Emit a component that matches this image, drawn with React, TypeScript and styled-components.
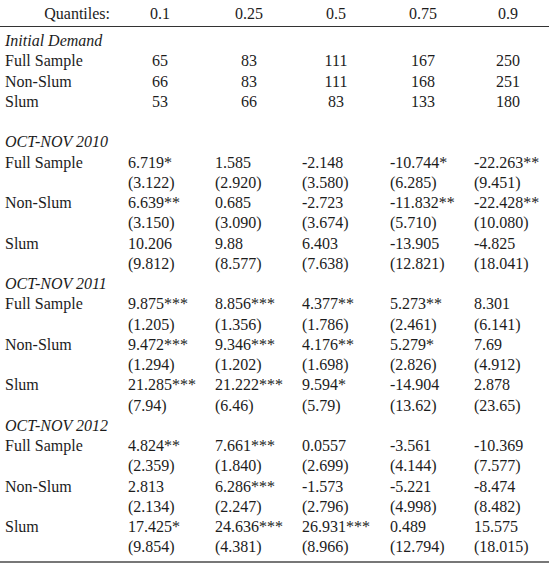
import styled, { createGlobalStyle } from "styled-components";

const GlobalStyle = createGlobalStyle`
    html, body {
        margin: 0;
        padding: 0;
        background: #ffffff;
    }
    body {
        font-family: "Liberation Serif", "Times New Roman", serif;
        color: #1c1c1c;
    }
`;

// columns: left edge of the figures and the width the centred numbers sit in
const COLS = [
    { track: 87, span: 64 },
    { track: 87, span: 68 },
    { track: 88, span: 68 },
    { track: 84, span: 66 },
    { track: 75, span: 68 },
];

const StyledWrapper = styled.div`
    width: 549px;
    height: 564px;
    overflow: hidden;
`;

const StyledRow = styled.div`
    display: grid;
    grid-template-columns: 128px ${COLS.map((c) => c.track + "px").join(" ")};
    height: 20.25px;
    line-height: 20.25px;
    font-size: 16px;
    white-space: nowrap;
`;

const HeaderRow = styled(StyledRow)`
    padding-top: 4px;
    padding-bottom: 1.5px;
`;

const Rule = styled.div<{ $thick?: number; $color?: string }>`
    width: 100%;
    height: ${({ $thick }) => ($thick ? $thick : 1.5)}px;
    background-color: ${({ $color }) => ($color ? $color : "#333")};
`;

const StyledBody = styled.div`
    padding-top: 3.75px;
    padding-bottom: 3px;
`;

const Label = styled.div<{ $italic?: boolean; $right?: boolean }>`
    padding-left: 5px;
    padding-right: ${({ $right }) => ($right ? "18px" : "0px")};
    text-align: ${({ $right }) => ($right ? "right" : "left")};
    font-style: ${({ $italic }) => ($italic ? "italic" : "normal")};
`;

const Centered = styled.div<{ $span: number }>`
    width: ${({ $span }) => $span}px;
    text-align: center;
`;

const Figure = styled.div`
    text-align: left;
`;

type Block = { label: string; coef: string[]; se: string[] };

const initial = [
    { label: "Full Sample", vals: ["65", "83", "111", "167", "250"] },
    { label: "Non-Slum", vals: ["66", "83", "111", "168", "251"] },
    { label: "Slum", vals: ["53", "66", "83", "133", "180"] },
];

const periods: { title: string; rows: Block[] }[] = [
    {
        title: "OCT-NOV 2010",
        rows: [
            { label: "Full Sample", coef: ["6.719*", "1.585", "-2.148", "-10.744*", "-22.263**"], se: ["(3.122)", "(2.920)", "(3.580)", "(6.285)", "(9.451)"] },
            { label: "Non-Slum", coef: ["6.639**", "0.685", "-2.723", "-11.832**", "-22.428**"], se: ["(3.150)", "(3.090)", "(3.674)", "(5.710)", "(10.080)"] },
            { label: "Slum", coef: ["10.206", "9.88", "6.403", "-13.905", "-4.825"], se: ["(9.812)", "(8.577)", "(7.638)", "(12.821)", "(18.041)"] },
        ],
    },
    {
        title: "OCT-NOV 2011",
        rows: [
            { label: "Full Sample", coef: ["9.875***", "8.856***", "4.377**", "5.273**", "8.301"], se: ["(1.205)", "(1.356)", "(1.786)", "(2.461)", "(6.141)"] },
            { label: "Non-Slum", coef: ["9.472***", "9.346***", "4.176**", "5.279*", "7.69"], se: ["(1.294)", "(1.202)", "(1.698)", "(2.826)", "(4.912)"] },
            { label: "Slum", coef: ["21.285***", "21.222***", "9.594*", "-14.904", "2.878"], se: ["(7.94)", "(6.46)", "(5.79)", "(13.62)", "(23.65)"] },
        ],
    },
    {
        title: "OCT-NOV 2012",
        rows: [
            { label: "Full Sample", coef: ["4.824**", "7.661***", "0.0557", "-3.561", "-10.369"], se: ["(2.359)", "(1.840)", "(2.699)", "(4.144)", "(7.577)"] },
            { label: "Non-Slum", coef: ["2.813", "6.286***", "-1.573", "-5.221", "-8.474"], se: ["(2.134)", "(2.247)", "(2.796)", "(4.998)", "(8.482)"] },
            { label: "Slum", coef: ["17.425*", "24.636***", "26.931***", "0.489", "15.575"], se: ["(9.854)", "(4.381)", "(8.966)", "(12.794)", "(18.015)"] },
        ],
    },
];

const App = () => {
    return (
        <StyledWrapper>
            <GlobalStyle />
            <HeaderRow>
                <Label $right>Quantiles:</Label>
                {["0.1", "0.25", "0.5", "0.75", "0.9"].map((q, i) => (
                    <Centered key={q} $span={COLS[i].span}>{q}</Centered>
                ))}
            </HeaderRow>
            <Rule $thick={1.5} $color="#333" />

            <StyledBody>
                <StyledRow>
                    <Label $italic>Initial Demand</Label>
                </StyledRow>
                {initial.map((r) => (
                    <StyledRow key={r.label}>
                        <Label>{r.label}</Label>
                        {r.vals.map((v, i) => (
                            <Centered key={i} $span={COLS[i].span}>{v}</Centered>
                        ))}
                    </StyledRow>
                ))}
                <StyledRow />

                {periods.map((p) => (
                    <div key={p.title}>
                        <StyledRow>
                            <Label $italic>{p.title}</Label>
                        </StyledRow>
                        {p.rows.map((r) => (
                            <div key={r.label}>
                                <StyledRow>
                                    <Label>{r.label}</Label>
                                    {r.coef.map((v, i) => (
                                        <Figure key={i}>{v}</Figure>
                                    ))}
                                </StyledRow>
                                <StyledRow>
                                    <Label />
                                    {r.se.map((v, i) => (
                                        <Figure key={i}>{v}</Figure>
                                    ))}
                                </StyledRow>
                            </div>
                        ))}
                    </div>
                ))}
            </StyledBody>
            <Rule $thick={2} $color="#777" />
        </StyledWrapper>
    );
};

export default App;
